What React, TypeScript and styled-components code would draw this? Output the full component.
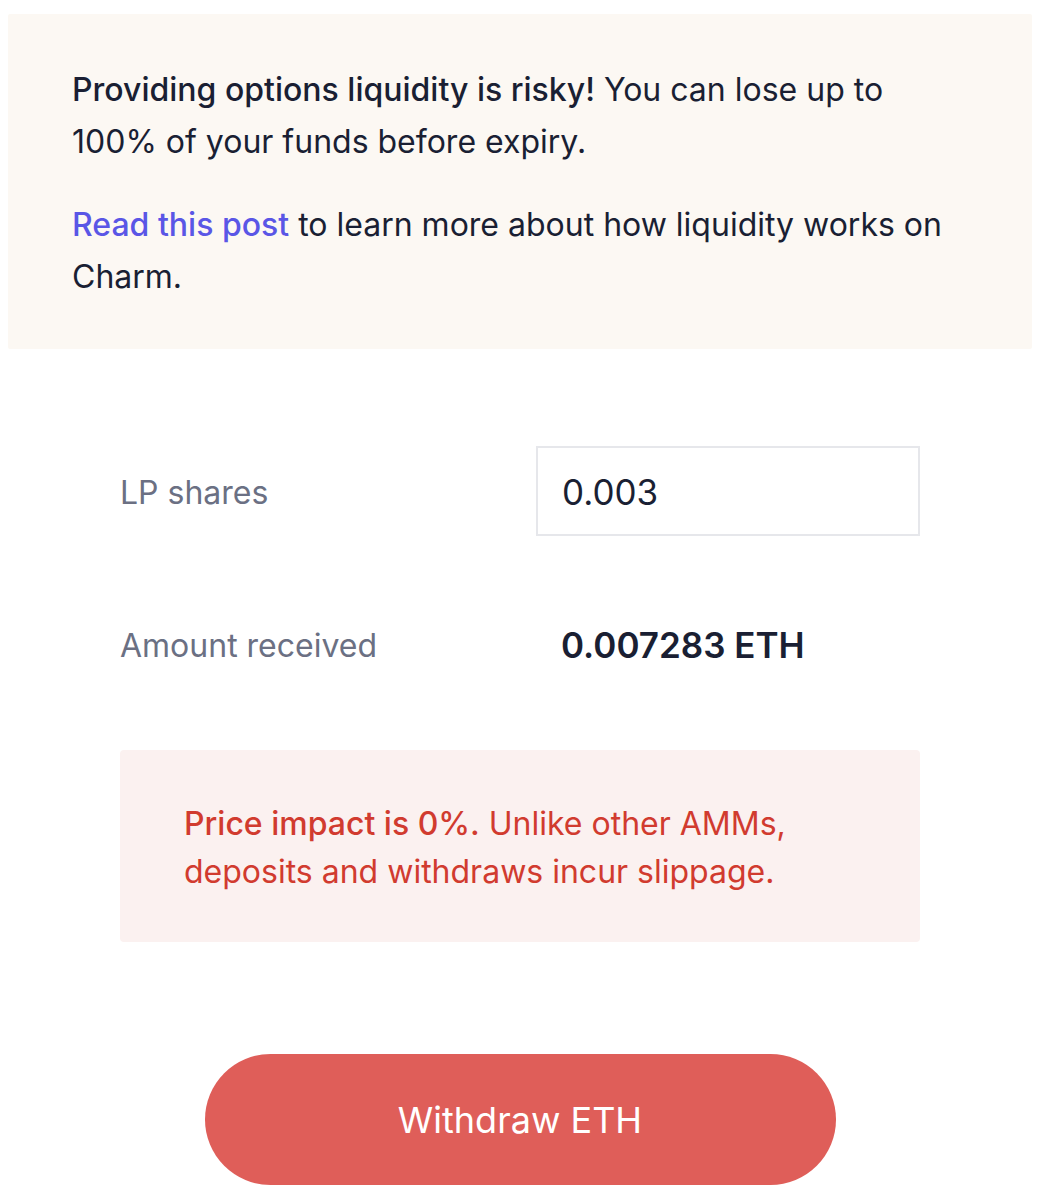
import styled, { createGlobalStyle } from "styled-components";

const GlobalStyle = createGlobalStyle`
  body {
    margin: 0;
    background: #ffffff;
    font-family: Inter, "Noto Sans", sans-serif;
    color: #1a202c;
  }
`;

const Page = styled.div`
  padding: 14px 14px 0 8px;
`;

const Notice = styled.div`
  background: #fcf8f3;
  border-radius: 2px;
  padding: 50px 64px 46px;
  font-size: 32px;
  line-height: 52px;
  color: #1a1f33;
  & p {
    margin: 0;
  }
  & p + p {
    margin-top: 31px;
  }
  & strong {
    font-weight: 500;
  }
  & a {
    color: #5a56e6;
    text-decoration: none;
    font-weight: 500;
  }
`;

const Form = styled.div`
  width: 800px;
  margin: 97px auto 0;
  display: flex;
  flex-direction: column;
`;

const Row = styled.div<{ $gap?: number }>`
  display: grid;
  grid-template-columns: 416px 384px;
  align-items: center;
  height: 90px;
  margin-top: ${(p) => p.$gap ?? 0}px;
`;

const Label = styled.span`
  font-size: 32px;
  color: #6b7083;
  padding-top: 2px;
`;

const Input = styled.input`
  box-sizing: border-box;
  width: 384px;
  height: 90px;
  border: 2px solid #e6e7eb;
  border-radius: 0;
  padding: 2px 24px 0;
  font-family: Inter, "Noto Sans", sans-serif;
  font-size: 35px;
  color: #1a1f33;
  outline: none;
  background: #fff;
`;

const Value = styled.span`
  padding-left: 25px;
  padding-top: 2px;
  font-size: 35px;
  font-weight: 600;
  color: #1a1f33;
`;

const Warning = styled.div`
  margin-top: 61px;
  background: #fbf1f0;
  border-radius: 4px;
  padding: 50px 64px 46px;
  font-size: 32px;
  line-height: 48px;
  color: #d13b2f;
  & strong {
    font-weight: 500;
  }
`;

const Button = styled.button`
  display: block;
  margin: 112px auto 0;
  width: 631px;
  height: 131px;
  border: none;
  border-radius: 66px;
  background: #df5e59;
  color: #ffffff;
  font-family: Inter, "Noto Sans", sans-serif;
  font-size: 36px;
  cursor: pointer;
`;

export default function App() {
  return (
    <Page>
      <GlobalStyle />
      <Notice>
        <p>
          <strong>Providing options liquidity is risky!</strong> You can lose up to
          100% of your funds before expiry.
        </p>
        <p>
          <a href="#">Read this post</a> to learn more about how liquidity works on
          Charm.
        </p>
      </Notice>
      <Form>
        <Row>
          <Label>LP shares</Label>
          <Input defaultValue="0.003" />
        </Row>
        <Row $gap={63}>
          <Label>Amount received</Label>
          <Value>0.007283 ETH</Value>
        </Row>
        <Warning>
          <strong>Price impact is 0%.</strong> Unlike other AMMs, deposits and
          withdraws incur slippage.
        </Warning>
      </Form>
      <Button>Withdraw ETH</Button>
    </Page>
  );
}
